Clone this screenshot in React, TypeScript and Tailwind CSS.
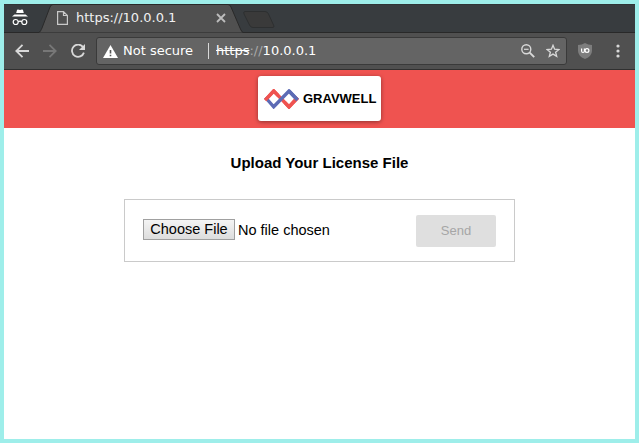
import React from "react";

function TabStrip() {
  return (
    <div className="relative flex h-[29px] items-center border-b border-[#292929] bg-[#383c3f]">
      <svg className="absolute left-0 top-0" width="631" height="29" viewBox="0 0 631 29">
        <path d="M0 0.5H631" stroke="#303436" />
        <path d="M34 29C36.500 28 37 26 38 24L46 3Q47 0.500 49 0.500H224Q226 0.500 227 3L236 24Q237.500 28.500 240 29Z" fill="#505050" stroke="#292929" />
        <path d="M241 7.500H261Q263.500 7.500 264.500 10L269.500 21Q271 23.500 268 23.500H249Q246.500 23.500 245.500 21L240 10Q239 7.500 241 7.500Z" fill="#3a3a3a" stroke="#2d2f30" />
      </svg>
      <div className="relative flex w-full items-center">
        <svg className="ml-[7px]" width="18" height="18" viewBox="0 0 18 18" fill="none">
          <path d="M5.200 4L6 1Q6.300 0.400 7 0.600L9 1.100L11 0.600Q11.700 0.400 12 1L12.800 4Z" fill="#fff" />
          <path d="M3.500 5.500H14.500L17 7.600H1Z" fill="#fff" />
          <circle cx="4.700" cy="13" r="2.500" stroke="#fff" strokeWidth="1.200" />
          <circle cx="13.300" cy="13" r="2.500" stroke="#fff" strokeWidth="1.200" />
          <path d="M7.200 12.700Q9 11.700 10.800 12.700" stroke="#fff" strokeWidth="1.200" />
        </svg>
        <svg className="ml-[28px]" width="11" height="14" viewBox="0 0 11 14" fill="none" stroke="#c9c9c9" strokeWidth="1.200">
          <path d="M0.600 0.600H6.500L10.400 4.500V13.400H0.600ZM6.500 0.600V4.500H10.400" />
        </svg>
        <span className="ml-2 w-[140px] text-[13px] leading-[18px] text-[#f0f0f0]">https://10.0.0.1</span>
        <svg width="10" height="10" viewBox="0 0 10 10" stroke="#bdbdbd" strokeWidth="1.800">
          <path d="M1 1L9 9M9 1L1 9" />
        </svg>
      </div>
    </div>
  );
}

function Toolbar() {
  return (
    <div className="flex h-[37px] items-center border-b border-[#303030] bg-[#505050]">
      <svg className="ml-[11px]" width="14" height="14" viewBox="0 0 14 14" fill="none" stroke="#d8d8d8" strokeWidth="1.800">
        <path d="M14 7H1.500M7.500 0.800L1.300 7L7.500 13.200" />
      </svg>
      <svg className="ml-[14px]" width="14" height="14" viewBox="0 0 14 14" fill="none" stroke="#777" strokeWidth="1.800">
        <path d="M0 7H12.500M6.500 0.800L12.700 7L6.500 13.200" />
      </svg>
      <svg className="ml-[14px]" width="14" height="14" viewBox="0 0 14 14" fill="none">
        <path d="M12.100 3.200A6.100 6.100 0 1 0 12.900 8.600" stroke="#d8d8d8" strokeWidth="1.800" />
        <path d="M14 0V6H8Z" fill="#d8d8d8" />
      </svg>
      <div className="ml-[11px] flex h-[28px] w-[471px] items-center rounded-[3px] border border-[#3a3a3a] bg-[#646464] text-[13px] leading-[18px] text-white">
        <svg className="ml-[6px]" width="15" height="13" viewBox="0 0 15 13">
          <path d="M7.500 0L15 13H0Z" fill="#fff" />
          <path d="M6.700 5H8.300V8.500H6.700ZM6.700 9.700H8.300V11.300H6.700Z" fill="#555" />
        </svg>
        <span className="ml-[5px] w-[85px] whitespace-nowrap">Not secure</span>
        <span className="h-[16px] w-px bg-[#d8d8d8]" />
        <span className="ml-[7px] grow whitespace-nowrap"><span className="line-through">https</span><span className="text-[#a9a9a9]">://</span>10.0.0.1</span>
        <svg width="14" height="14" viewBox="0 0 14 14" fill="none" stroke="#d8d8d8">
          <circle cx="5.300" cy="5.300" r="4.500" strokeWidth="1.400" />
          <path d="M3 5.300H7.600" strokeWidth="1.200" />
          <path d="M8.700 8.700L13.200 13.200" strokeWidth="1.900" />
        </svg>
        <svg className="ml-[11px] mr-[6px]" width="14" height="14" viewBox="0 0 14 14" fill="none" stroke="#d8d8d8" strokeWidth="1.300">
          <path d="M7 1.300L8.600 5.200L12.900 5.500L9.600 8.200L10.700 12.400L7 10.100L3.300 12.400L4.400 8.200L1.100 5.500L5.400 5.200Z" />
        </svg>
      </div>
      <svg className="ml-[11px]" width="14" height="16" viewBox="0 0 14 16" fill="none">
        <path d="M7 0Q10 2 14 2V8Q14 13 7 16Q0 13 0 8V2Q4 2 7 0Z" fill="#7d7d7d" />
        <path d="M3.600 5.500V8Q3.600 9.500 5 9.500Q6.400 9.500 6.400 8V5.500" stroke="#fff" strokeWidth="1.200" />
        <circle cx="9" cy="7.500" r="1.900" stroke="#fff" strokeWidth="1.200" />
      </svg>
      <svg className="ml-[24px]" width="4" height="14" viewBox="0 0 4 14" fill="#d8d8d8">
        <circle cx="2" cy="2" r="1.600" />
        <circle cx="2" cy="7" r="1.600" />
        <circle cx="2" cy="12" r="1.600" />
      </svg>
    </div>
  );
}

function Logo() {
  return (
    <div className="flex h-[45px] w-[123px] items-center rounded-[3px] bg-white shadow-[0_1px_4px_rgba(0,0,0,0.4)]">
      <svg className="ml-[6px] shrink-0" width="35" height="20" viewBox="0 0 35 20" fill="none" strokeWidth="3.400">
        <path d="M1.200 11.200L9.700 2L17.500 10L25 18L33.800 8.800" stroke="#ef5350" />
        <path d="M1.500 8.500L9.700 17.800L25 2L33.500 10.800" stroke="#5c6bb5" />
        <path d="M1.200 11.200L9.700 2L14 6.400" stroke="#ef5350" />
        <path d="M33.500 8.500L25 17.800L20.700 13.400" stroke="#ef5350" />
        <path d="M25 2L33.500 11" stroke="#5c6bb5" />
      </svg>
      <span className="ml-[4px] text-[13px] font-bold leading-4 text-black">GRAVWELL</span>
    </div>
  );
}

export default function App() {
  return (
    <div className="flex h-[443px] w-[639px] flex-col overflow-hidden border-4 border-[#9eeeea] bg-white">
      <div className="font-['DejaVu_Sans',sans-serif]">
        <TabStrip />
        <Toolbar />
      </div>
      <div className="font-['Liberation_Sans',Arial,sans-serif]">
        <header className="flex h-[58px] justify-center bg-[#ef5350] pt-[6px]">
          <Logo />
        </header>
        <main className="flex flex-col items-center text-black">
          <h1 className="mt-[26px] text-[15px] font-bold leading-[18px]">Upload Your License File</h1>
          <form className="mt-[27px] flex h-[63px] w-[391px] items-center border border-[#cacaca] pl-[18px] pr-[18px]">
            <button type="button" className="-mt-[2px] h-[21px] w-[92px] whitespace-nowrap border border-[#a0a0a0] bg-linear-to-b from-[#f4f4f4] to-[#dddddd] text-[14.500px] leading-[19px]">Choose File</button>
            <span className="-mt-[1px] ml-[3px] grow text-[14.500px] leading-[18px]">No file chosen</span>
            <button type="button" className="h-[32px] w-[80px] rounded-[2px] bg-[#dfdfdf] text-[13px] text-[#a6a6a6]">Send</button>
          </form>
        </main>
      </div>
    </div>
  );
}
